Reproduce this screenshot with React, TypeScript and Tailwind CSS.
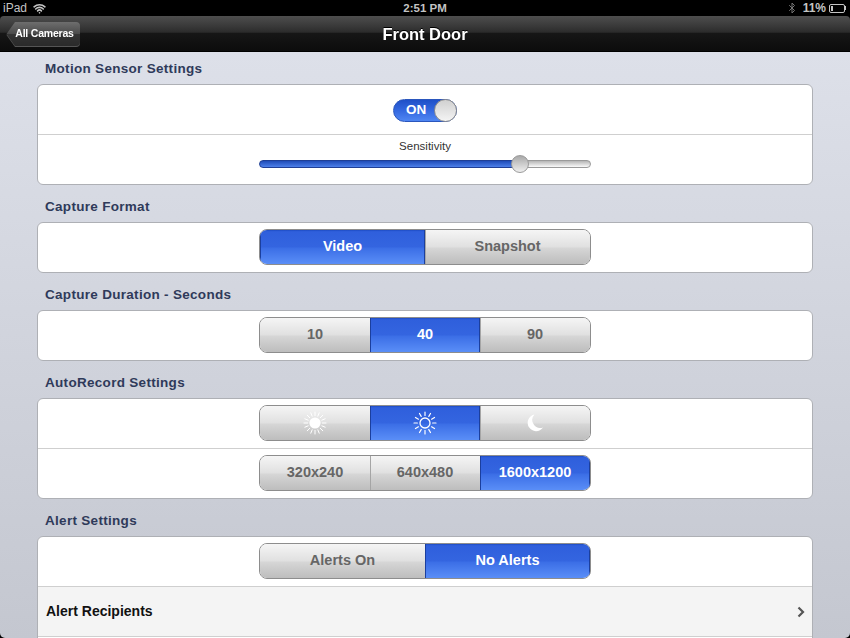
import { Bluetooth, Wifi } from "lucide-react";
import type { ReactNode } from "react";

const blue = "bg-[linear-gradient(#1d4cc4_0,#2f5fdc_5%,#3465e0_50%,#3b6ee6_53%,#5a8ef7_100%)] text-white";
const grey = "bg-[linear-gradient(#f5f5f5_0,#e0e0e0_50%,#d6d6d6_53%,#bdbdbd_100%)] text-[#666]";

function Rays({ count, inner, outer, width }: { count: number; inner: number; outer: number; width: number }) {
  return (
    <>
      {Array.from({ length: count }).map((_, i) => {
        const a = (i * Math.PI * 2) / count;
        return (
          <line
            key={i}
            x1={12 + Math.cos(a) * inner}
            y1={12 + Math.sin(a) * inner}
            x2={12 + Math.cos(a) * outer}
            y2={12 + Math.sin(a) * outer}
            stroke="white"
            strokeWidth={width}
            strokeLinecap="round"
          />
        );
      })}
    </>
  );
}

function SunFull() {
  return (
    <svg width="24" height="24" viewBox="0 0 24 24">
      <circle cx="12" cy="12" r="5.6" fill="white" />
      <Rays count={16} inner={7.4} outer={11} width={1} />
    </svg>
  );
}

function SunOutline() {
  return (
    <svg width="24" height="24" viewBox="0 0 24 24">
      <circle cx="12" cy="12" r="5" fill="none" stroke="white" strokeWidth="1.3" />
      <Rays count={12} inner={7.6} outer={11} width={1.2} />
    </svg>
  );
}

function Moon() {
  return (
    <svg width="24" height="24" viewBox="0 0 24 24">
      <path d="M11.5 3.5A8.4 8.4 0 1 0 20 16.5 8 8 0 0 1 11.5 3.5Z" fill="white" />
    </svg>
  );
}

function Segmented({ items, active }: { items: { label: ReactNode; w: string }[]; active: number }) {
  return (
    <div className="flex h-9 w-[332px] mb-[2px] rounded-[8px] border border-[#8d8d8d] overflow-hidden">
      {items.map((item, i) => (
        <div
          key={i}
          className={`flex items-center justify-center text-[14.5px] font-bold ${item.w} ${i === active ? blue : grey} ${
            i === active ? "shadow-[inset_1px_0_0_#1b3f9e,inset_-1px_0_0_#1b3f9e]" : i > 0 ? "shadow-[inset_1px_0_0_#a5a5a5]" : ""
          }`}
        >
          {item.label}
        </div>
      ))}
    </div>
  );
}

function Section({ title, children }: { title: string; children: ReactNode }) {
  return (
    <section className="shrink-0">
      <h2 className="h-[31px] flex items-end pb-[7px] pl-2 text-[13.5px] leading-4 font-bold tracking-[0.3px] text-[#2f3a5a]">
        {title}
      </h2>
      <div className="rounded-[6px] border border-[#aeb0b5] bg-white overflow-hidden divide-y divide-[#cfcfcf]">
        {children}
      </div>
    </section>
  );
}

// divide-y puts the line inside the row's own box, so rows followed by another are 1px taller
function Row({ children }: { children: ReactNode }) {
  return <div className="h-[49px] not-last:h-[50px] flex flex-col items-center justify-center">{children}</div>;
}

export default function App() {
  return (
    <div className="relative h-[638px] w-[850px] overflow-hidden flex flex-col bg-black font-['Liberation_Sans',Arial,sans-serif]">
      {/* status bar */}
      <header className="h-4 shrink-0 px-[3px] flex items-center justify-between text-[12px] leading-4 text-[#c4c4c4] relative">
        <div className="flex items-center gap-[6px]">
          <span>iPad</span>
          <Wifi size={13} strokeWidth={3} />
        </div>
        <span className="absolute left-1/2 -translate-x-1/2 font-bold text-[11.5px]">2:51 PM</span>
        <div className="flex items-center gap-[3px] pr-[1px]">
          <Bluetooth size={12} strokeWidth={2} className="text-[#777]" />
          <span className="font-bold ml-[2px]">11%</span>
          <div className="flex items-center">
            <div className="w-[16px] h-[9px] border border-[#c4c4c4] rounded-[2px] p-[1px]">
              <div className="h-full w-[2px] bg-[#c4c4c4]" />
            </div>
            <div className="w-[1px] h-[4px] bg-[#c4c4c4]" />
          </div>
        </div>
      </header>

      {/* nav bar */}
      <nav className="h-9 shrink-0 relative flex items-center pl-[6px] rounded-t-[4px] border-b border-black bg-[linear-gradient(#4e4e4e_0,#3c3c3c_25%,#2c2c2c_46%,#161616_50%,#0c0c0c_100%)]">
        <div className="flex items-center h-6 drop-shadow-[0_1px_0_#555]">
          <svg width="9" height="24" viewBox="0 0 9 24">
            <defs>
              <linearGradient id="backTip" x1="0" y1="0" x2="0" y2="1">
                <stop offset="0" stopColor="#6e6e6e" />
                <stop offset="0.5" stopColor="#4a4a4a" />
                <stop offset="0.52" stopColor="#333" />
                <stop offset="1" stopColor="#2a2a2a" />
              </linearGradient>
            </defs>
            <path d="M9 0 L0.5 12 L9 24Z" fill="url(#backTip)" />
          </svg>
          <div className="h-6 w-[65px] pr-[6px] rounded-r-[4px] flex items-center justify-center text-[10.5px] tracking-[-0.2px] font-bold text-white bg-[linear-gradient(#6e6e6e_0,#4a4a4a_50%,#333_52%,#2a2a2a_100%)]">
            All Cameras
          </div>
        </div>
        <h1 className="absolute left-1/2 -translate-x-1/2 mt-[1px] text-[16.5px] font-bold text-white drop-shadow-[0_-1px_0_#000]">
          Front Door
        </h1>
      </nav>

      {/* settings */}
      <main className="flex-1 min-h-0 overflow-hidden rounded-b-[5px] flex flex-col gap-[6px] pt-[1px] px-[37px] bg-[linear-gradient(#dde0e9,#c4c7d0)]">
        <Section title="Motion Sensor Settings">
          <Row>
            <div className="relative w-[64px] h-[23px] mt-[1px] rounded-full border border-[#2a56bd] bg-[linear-gradient(#1f50c8,#3468e0_50%,#4f86f2)] flex items-center pl-[12px] text-[13.5px] font-bold text-white">
              ON
              <div className="absolute right-[-1px] top-[-1px] h-[23px] w-[23px] rounded-full border border-[#8c8c8c] bg-[linear-gradient(#d0d0d0,#f4f4f4)]" />
            </div>
          </Row>
          <div className="h-[49px] flex flex-col items-center pt-[3px]">
            <span className="text-[11.5px] leading-4 text-[#333]">Sensitivity</span>
            <div className="relative h-[8px] w-[332px] flex rounded-full mt-[6px]">
              <div className="h-full w-[261px] rounded-l-full border border-[#1f3f95] bg-[linear-gradient(#1f4cb8,#4d80ea)]" />
              <div className="h-full flex-1 rounded-r-full border border-[#9a9a9a] bg-[linear-gradient(#b5b5b5,#fafafa)]" />
              <div className="absolute left-[252px] top-[-5px] h-[18px] w-[18px] rounded-full border border-[#9a9a9a] bg-[linear-gradient(#a9a9a9,#efefef)]" />
            </div>
          </div>
        </Section>

        <Section title="Capture Format">
          <Row>
            <Segmented
              active={0}
              items={[
                { label: "Video", w: "w-[165px]" },
                { label: "Snapshot", w: "flex-1" },
              ]}
            />
          </Row>
        </Section>

        <Section title="Capture Duration - Seconds">
          <Row>
            <Segmented
              active={1}
              items={[
                { label: "10", w: "w-[110px]" },
                { label: "40", w: "w-[110px]" },
                { label: "90", w: "flex-1" },
              ]}
            />
          </Row>
        </Section>

        <Section title="AutoRecord Settings">
          <Row>
            <Segmented
              active={1}
              items={[
                { label: <SunFull />, w: "w-[110px]" },
                { label: <SunOutline />, w: "w-[110px]" },
                { label: <Moon />, w: "flex-1" },
              ]}
            />
          </Row>
          <Row>
            <Segmented
              active={2}
              items={[
                { label: "320x240", w: "w-[110px]" },
                { label: "640x480", w: "w-[110px]" },
                { label: "1600x1200", w: "flex-1" },
              ]}
            />
          </Row>
        </Section>

        <Section title="Alert Settings">
          <Row>
            <Segmented
              active={1}
              items={[
                { label: "Alerts On", w: "w-[165px]" },
                { label: "No Alerts", w: "flex-1" },
              ]}
            />
          </Row>
          <div className="h-[50px] flex items-center justify-between pl-2 pr-[7px] bg-[#f4f4f4] text-[14px] font-bold text-[#111]">
            Alert Recipients
            <svg width="8" height="12" viewBox="0 0 8 12">
              <path d="M1.5 1.5 6 6 1.5 10.5" fill="none" stroke="#555" strokeWidth="2.2" />
            </svg>
          </div>
          <div className="h-[49px] bg-white" />
        </Section>
      </main>
    </div>
  );
}
